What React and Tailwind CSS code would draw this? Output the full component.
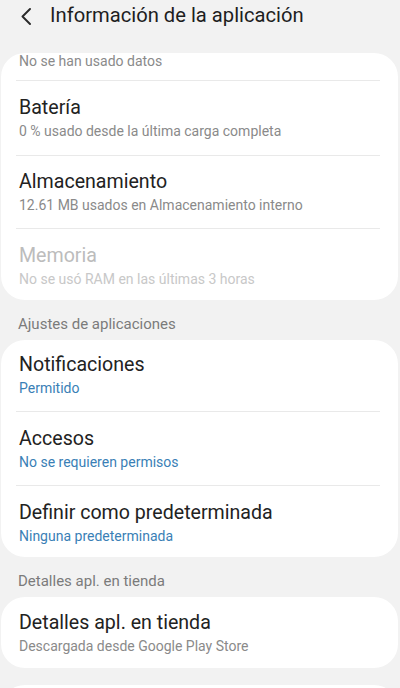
import React from "react";

function Divider() {
  return <div className="h-px bg-[#e9e9e9] ml-[15px] mr-[18px]" />;
}

function Row({ title, sub, pad, titleColor = "text-[#222222]", subColor = "text-[#8a8a8a]" }) {
  return (
    <div className={`pl-[18px] pr-[18px] ${pad}`}>
      <div className={`text-[19.6px] leading-[24px] ${titleColor}`}>{title}</div>
      <div className={`mt-[2px] text-[14px] leading-[18px] ${subColor}`}>{sub}</div>
    </div>
  );
}

function Section({ label }) {
  return (
    <div className="h-[40px] pl-[18px] pt-[14px] text-[15px] leading-[20px] text-[#7b7b7b]">{label}</div>
  );
}

export default function App() {
  return (
    <div className="w-[400px] h-[688px] overflow-hidden bg-[#f2f2f2] font-['Roboto',sans-serif]">
      <div className="h-[53px] flex items-start pt-[3px]">
        <div className="w-[50px] h-[24px] flex items-center pl-[20px]">
          <svg width="12" height="17" viewBox="0 0 12 17" className="mt-[3px]">
            <path d="M10 1 L2.5 8.5 L10 16" fill="none" stroke="#2a2a2a" strokeWidth="1.9" strokeLinecap="round" strokeLinejoin="round" />
          </svg>
        </div>
        <div className="text-[20.2px] leading-[24px] text-[#1e1e1e]">Información de la aplicación</div>
      </div>

      <div className="mx-[1px] w-[397px] bg-white rounded-[24px] overflow-hidden">
        <div className="h-[27px] pl-[18px]">
          <div className="text-[14px] leading-[16px] text-[#8a8a8a]">No se han usado datos</div>
        </div>
        <Divider />
        <Row title="Batería" sub="0 % usado desde la última carga completa" pad="pt-[15px] pb-[15px]" />
        <Divider />
        <Row title="Almacenamiento" sub="12.61 MB usados en Almacenamiento interno" pad="pt-[14px] pb-[14px]" />
        <Divider />
        <Row
          title="Memoria"
          sub="No se usó RAM en las últimas 3 horas"
          pad="pt-[15px] pb-[12px]"
          titleColor="text-[#bcbcbc]"
          subColor="text-[#c8c8c8]"
        />
      </div>

      <Section label="Ajustes de aplicaciones" />

      <div className="mx-[1px] w-[397px] bg-white rounded-[24px] overflow-hidden">
        <Row title="Notificaciones" sub="Permitido" pad="pt-[13px] pb-[14px]" subColor="text-[#3a7fb6]" />
        <Divider />
        <Row title="Accesos" sub="No se requieren permisos" pad="pt-[15px] pb-[14px]" subColor="text-[#3a7fb6]" />
        <Divider />
        <Row title="Definir como predeterminada" sub="Ninguna predeterminada" pad="pt-[15px] pb-[12px]" subColor="text-[#3a7fb6]" />
      </div>

      <Section label="Detalles apl. en tienda" />

      <div className="mx-[1px] w-[397px] bg-white rounded-[24px] overflow-hidden">
        <Row title="Detalles apl. en tienda" sub="Descargada desde Google Play Store" pad="pt-[14px] pb-[13px]" />
      </div>

      <div className="mt-[17px] mx-[1px] w-[397px] h-[60px] bg-white rounded-[24px]" />
    </div>
  );
}
